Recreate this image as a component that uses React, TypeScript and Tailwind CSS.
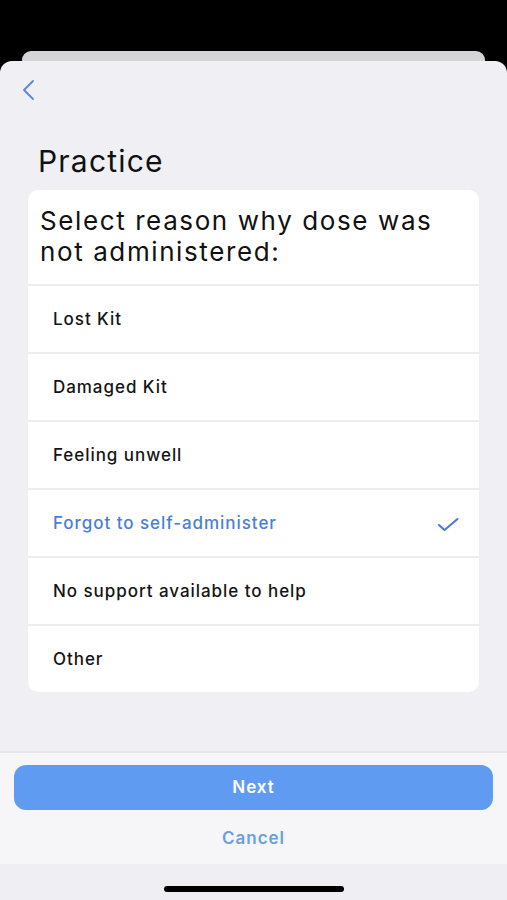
import React from "react";

const items = [
  "Lost Kit",
  "Damaged Kit",
  "Feeling unwell",
  "Forgot to self-administer",
  "No support available to help",
  "Other",
];

export default function App() {
  const selected = 3;
  return (
    <div
      className="w-[507px] h-[900px] bg-black flex flex-col overflow-hidden"
      style={{ fontFamily: "Inter, 'Noto Sans', sans-serif" }}
    >
      <div className="h-[51px] shrink-0" />
      <div className="h-[10px] shrink-0 mx-[22px] bg-[#d5d5d7] rounded-t-[9px]" />
      <div className="flex-1 bg-[#efeff4] rounded-t-[12px] flex flex-col">
        <div className="h-[52px] flex items-center pl-[21px] pt-[6px]">
          <svg width="14" height="22" viewBox="0 0 14 22" fill="none">
            <path d="M12 2 L3 11 L12 20" stroke="#5a86d8" strokeWidth="1.8" strokeLinecap="round" strokeLinejoin="round" />
          </svg>
        </div>
        <div className="pl-[38px] pt-[30px] h-[77px] text-[30px] leading-[36px] text-[#111] tracking-[1.2px]">
          Practice
        </div>
        <div className="mx-[28px] bg-white rounded-[10px] overflow-hidden">
          <div className="pl-[12px] pr-[8px] pt-[15px] pb-[14px] text-[26px] leading-[31px] text-[#111] tracking-[1.6px] h-[94px]">
            Select reason why dose was not administered:
          </div>
          {items.map((t, i) => (
            <div
              key={t}
              className="h-[68px] border-t-2 border-[#ededf0] flex items-center pl-[25px] pr-[21px] pt-[2px] justify-between"
            >
              <span
                className={
                  "text-[17px] font-medium tracking-[0.95px] " +
                  (i === selected ? "text-[#4a7fd4]" : "text-[#141414]")
                }
              >
                {t}
              </span>
              {i === selected && (
                <svg width="22" height="15" viewBox="0 0 22 15" fill="none" className="mr-[-1px]">
                  <path d="M2 8 L7.5 13 L20.5 2" stroke="#4a7bd6" strokeWidth="2.1" strokeLinecap="round" strokeLinejoin="round" />
                </svg>
              )}
            </div>
          ))}
        </div>
        <div className="flex-1" />
        <div className="border-t-2 border-[#e6e6ea] bg-[#f6f6f8] h-[113px] flex flex-col px-[14px] pt-[12px]">
          <div className="h-[46px] rounded-[12px] bg-[#5f9cf1] flex items-center justify-center text-white text-[17px] font-semibold tracking-[1px]">
            Next
          </div>
          <div className="h-[55px] pt-[3px] flex items-center justify-center text-[17px] font-semibold tracking-[1px] text-[#6a9fe2]">
            Cancel
          </div>
        </div>
        <div className="h-[36px] bg-[#efeff3] flex items-start justify-center pt-[22px]">
          <div className="w-[180px] h-[6px] rounded-full bg-black" />
        </div>
      </div>
    </div>
  );
}
